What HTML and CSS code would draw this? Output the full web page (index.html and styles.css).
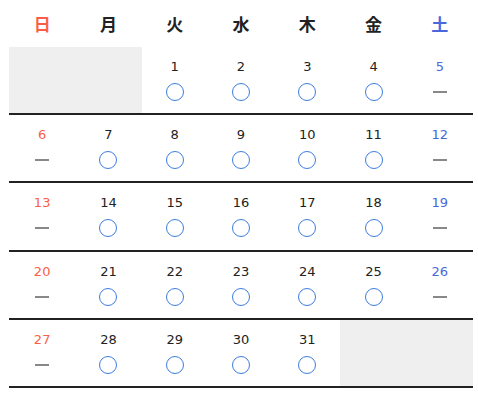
FILE: index.html
```html
<!DOCTYPE html>
<html lang="ja">
  <head>
    <meta charset="utf-8" />
    <title>予約カレンダー</title>
    <link rel="stylesheet" href="styles.css">
  </head>
  <body>
    <div class="calendar">
      <table class="month">
        <thead>
          <tr>
            <th class="sun">日</th>
            <th>月</th>
            <th>火</th>
            <th>水</th>
            <th>木</th>
            <th>金</th>
            <th class="sat">土</th>
          </tr>
        </thead>
        <tbody>
          <tr>
            <td class="blank"></td>
            <td class="blank"></td>
            <td><span class="day">1</span><span class="ok"></span></td>
            <td><span class="day">2</span><span class="ok"></span></td>
            <td><span class="day">3</span><span class="ok"></span></td>
            <td><span class="day">4</span><span class="ok"></span></td>
            <td class="sat"><span class="day">5</span><span class="closed"></span></td>
          </tr>
          <tr>
            <td class="sun"><span class="day">6</span><span class="closed"></span></td>
            <td><span class="day">7</span><span class="ok"></span></td>
            <td><span class="day">8</span><span class="ok"></span></td>
            <td><span class="day">9</span><span class="ok"></span></td>
            <td><span class="day">10</span><span class="ok"></span></td>
            <td><span class="day">11</span><span class="ok"></span></td>
            <td class="sat"><span class="day">12</span><span class="closed"></span></td>
          </tr>
          <tr>
            <td class="sun"><span class="day">13</span><span class="closed"></span></td>
            <td><span class="day">14</span><span class="ok"></span></td>
            <td><span class="day">15</span><span class="ok"></span></td>
            <td><span class="day">16</span><span class="ok"></span></td>
            <td><span class="day">17</span><span class="ok"></span></td>
            <td><span class="day">18</span><span class="ok"></span></td>
            <td class="sat"><span class="day">19</span><span class="closed"></span></td>
          </tr>
          <tr>
            <td class="sun"><span class="day">20</span><span class="closed"></span></td>
            <td><span class="day">21</span><span class="ok"></span></td>
            <td><span class="day">22</span><span class="ok"></span></td>
            <td><span class="day">23</span><span class="ok"></span></td>
            <td><span class="day">24</span><span class="ok"></span></td>
            <td><span class="day">25</span><span class="ok"></span></td>
            <td class="sat"><span class="day">26</span><span class="closed"></span></td>
          </tr>
          <tr>
            <td class="sun"><span class="day">27</span><span class="closed"></span></td>
            <td><span class="day">28</span><span class="ok"></span></td>
            <td><span class="day">29</span><span class="ok"></span></td>
            <td><span class="day">30</span><span class="ok"></span></td>
            <td><span class="day">31</span><span class="ok"></span></td>
            <td class="blank"></td>
            <td class="blank"></td>
          </tr>
        </tbody>
      </table>
    </div>
  </body>
</html>
```

FILE: styles.css
```css
html {
  background-color: white;
}

body {
  margin: 0;
  font-family: "DejaVu Sans", "Noto Sans CJK JP", sans-serif;
  color: #222;
}

.calendar {
  width: 464px;
  padding-left: 9px;
}

.month {
  width: 100%;
  table-layout: fixed;
  border-collapse: collapse;
  border-spacing: 0;
}

.month th {
  height: 46.75px;
  padding: 0;
  font-family: "Noto Sans CJK JP", sans-serif;
  font-size: 17px;
  font-weight: bold;
  text-align: center;
  vertical-align: middle;
  color: #222;
}

.month td {
  height: 66.25px;
  padding: 0;
  text-align: center;
  vertical-align: top;
  border-bottom: 2px solid #222;
}

.month .sun {
  color: #fa5f46;
}

.month .sat {
  color: #4a68dc;
}

.month .blank {
  background-color: #efefef;
}

.day {
  display: block;
  margin-top: 12px;
  font-size: 13px;
  line-height: 16px;
}

.ok {
  display: block;
  width: 16px;
  height: 16px;
  margin: 8px auto 0;
  border: 1px solid #3d7ddf;
  border-radius: 50%;
}

.closed {
  display: block;
  width: 14px;
  height: 2px;
  margin: 16px auto 0;
  background-color: #888;
}
```
